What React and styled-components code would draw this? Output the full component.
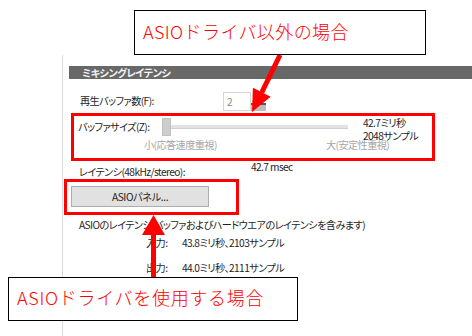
import React from "react";
import styled, { createGlobalStyle } from "styled-components";

const Global = createGlobalStyle`
  html, body { margin: 0; padding: 0; background: #fff; }
  body { font-family: "Noto Sans CJK JP", "Noto Sans", sans-serif; }
`;

const Stage = styled.div`
  position: relative;
  width: 472px;
  height: 336px;
  overflow: hidden;
  background: #fff;
  font-family: "Noto Sans CJK JP", "Noto Sans", sans-serif;
  font-feature-settings: "palt";
  font-size: 10.2px;
  letter-spacing: -0.6px;
  color: #1e1e1e;
`;

const Panel = styled.div`
  margin-left: 62px;
  padding-top: 11px;
  margin-top: 55px;
  border-left: 1px solid #d9d9d9;
  padding-left: 1px;
  height: 281px;
  box-sizing: border-box;
`;

const SectionHeader = styled.div`
  margin-left: 5px;
  height: 13px;
  background: #686868;
  color: #f2f2f2;
  font-weight: 700;
  font-size: 10.2px;
  line-height: 13px;
  padding-left: 13px;
  letter-spacing: -0.5px;
`;

const Row = styled.div`
  display: flex;
  align-items: center;
  padding-left: ${(p) => p.$indent || 0}px;
  margin-top: ${(p) => p.$mt || 0}px;
  height: ${(p) => p.$h || 12}px;
`;

const Label = styled.span`
  display: block;
  width: ${(p) => (p.$w ? `${p.$w}px` : "auto")};
  flex: none;
  line-height: 12px;
  height: 12px;
  white-space: nowrap;
  color: ${(p) => (p.$muted ? "#a6a6a6" : "#1e1e1e")};
`;

const SpinInput = styled.div`
  display: flex;
  align-items: flex-end;
`;

const InputBox = styled.div`
  width: 28px;
  height: 19px;
  border: 1px solid #d6d6d6;
  box-sizing: border-box;
  color: #8c8c8c;
  line-height: 17px;
  padding-left: 3px;
`;

const SpinButton = styled.div`
  width: 15px;
  height: 8px;
  background: #bdbdbd;
  border-top: 2px solid #5a5a5a;
  box-sizing: border-box;
`;

const Highlight = styled.div`
  border: 3px solid #ff0000;
  box-sizing: border-box;
  margin-left: ${(p) => p.$ml}px;
  margin-top: ${(p) => p.$mt}px;
  width: ${(p) => p.$w}px;
  height: ${(p) => p.$h}px;
`;

const SliderRow = styled.div`
  display: flex;
  align-items: center;
  padding-left: 4px;
  margin-top: 2px;
  height: 18px;
`;

const Slider = styled.div`
  display: flex;
  align-items: center;
  width: 186px;
  height: 18px;
  flex: none;
`;

const Thumb = styled.div`
  width: 9px;
  height: 18px;
  background: #cdcdcd;
  border: 1px solid #c2c2c2;
  box-sizing: border-box;
`;

const Track = styled.div`
  flex: 1;
  height: 3px;
  background: #e3e3e3;
  border-bottom: 1px solid #d0d0d0;
`;

const Values = styled.div`
  margin-left: 15px;
  margin-top: 4px;
  display: flex;
  flex-direction: column;
`;

const ValueLine = styled.span`
  display: block;
  height: 13px;
  line-height: 13px;
  white-space: nowrap;
`;

const ScaleRow = styled.div`
  display: flex;
  padding-left: 70px;
  margin-top: 3px;
  color: #a6a6a6;
`;

const LatencyRow = styled.div`
  display: flex;
  align-items: flex-start;
  padding-left: 15px;
  height: 18px;
`;

const LatencyLabel = styled(Label)`
  margin-top: 5px;
`;

const PanelButton = styled.button`
  display: block;
  margin: 4px 0 0 4px;
  width: 138px;
  height: 21px;
  background: #e1e1e1;
  border: 1px solid #adadad;
  font-family: inherit;
  font-feature-settings: "palt";
  font-size: 10.2px;
  letter-spacing: -0.4px;
  color: #1e1e1e;
  padding: 0;
  line-height: 19px;
`;

const Callout = styled.div`
  position: absolute;
  left: ${(p) => p.$x}px;
  top: ${(p) => p.$y}px;
  width: ${(p) => p.$w}px;
  height: ${(p) => p.$h}px;
  box-sizing: border-box;
  border: 1.5px solid #000;
  background: #fff;
  color: #ff0000;
  font-size: 18px;
  font-weight: 300;
  letter-spacing: ${(p) => p.$ls || 0}px;
  line-height: 22px;
  padding: ${(p) => p.$pt}px 0 0 ${(p) => p.$pl}px;
  font-feature-settings: normal;
  white-space: nowrap;
`;

const Overlay = styled.svg`
  position: absolute;
  left: 0;
  top: 0;
  pointer-events: none;
`;

export default function App() {
  return (
    <Stage>
      <Global />
      <Panel>
        <SectionHeader>ミキシングレイテンシ</SectionHeader>
        <Row $indent={16} $mt={12} $h={20}>
          <Label $w={143}>再生バッファ数(F):</Label>
          <SpinInput>
            <InputBox>2</InputBox>
            <SpinButton />
          </SpinInput>
        </Row>
        <Highlight $ml={7} $mt={2} $w={364} $h={48}>
          <SliderRow>
            <Label $w={84}>バッファサイズ(Z):</Label>
            <Slider>
              <Thumb />
              <Track />
            </Slider>
            <Values>
              <ValueLine>42.7ミリ秒</ValueLine>
              <ValueLine>2048サンプル</ValueLine>
            </Values>
          </SliderRow>
          <ScaleRow>
            <Label $w={182} $muted>小(応答速度重視)</Label>
            <Label $muted>大(安定性重視)</Label>
          </ScaleRow>
        </Highlight>
        <LatencyRow>
          <LatencyLabel $w={172}>レイテンシ(48kHz/stereo):</LatencyLabel>
          <Label>42.7 msec</Label>
        </LatencyRow>
        <Highlight $ml={0} $mt={0} $w={175} $h={36}>
          <PanelButton>ASIOパネル...</PanelButton>
        </Highlight>
        <Row $indent={15} $mt={4}>
          <Label>ASIOのレイテンシ(バッファおよびハードウエアのレイテンシを含みます)</Label>
        </Row>
        <Row $indent={82} $mt={6}>
          <Label $w={36}>入力:</Label>
          <Label>43.8ミリ秒、2103サンプル</Label>
        </Row>
        <Row $indent={82} $mt={13}>
          <Label $w={36}>出力:</Label>
          <Label>44.0ミリ秒、2111サンプル</Label>
        </Row>
      </Panel>

      <Overlay width="472" height="336" viewBox="0 0 472 336">
        <line x1="280" y1="55" x2="261.8" y2="92.3" stroke="#ff0000" strokeWidth="5" />
        <polygon points="252,112 270.7,96.8 252.9,87.8" fill="#ff0000" />
        <line x1="153.5" y1="278" x2="153.5" y2="233" stroke="#ff0000" strokeWidth="5" />
        <polygon points="153.5,215 142,235 165,235" fill="#ff0000" />
      </Overlay>

      <Callout $x={134} $y={10} $w={292} $h={45} $pt={9} $pl={8} $ls={0.4}>
        ASIOドライバ以外の場合
      </Callout>
      <Callout $x={8} $y={277} $w={290} $h={44} $pt={8} $pl={8} $ls={0.7}>
        ASIOドライバを使用する場合
      </Callout>
    </Stage>
  );
}
